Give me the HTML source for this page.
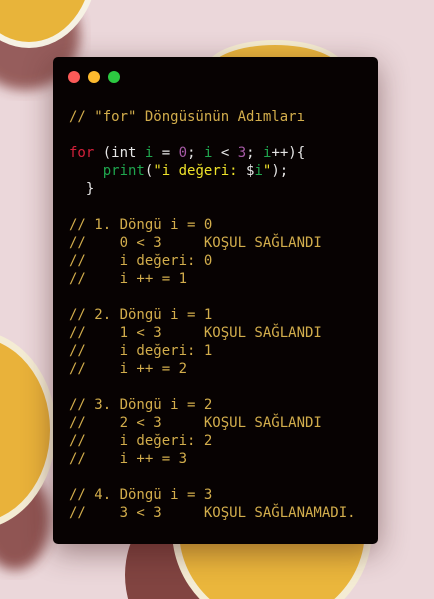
<!DOCTYPE html>
<html><head><meta charset="utf-8"><style>
html,body{margin:0;padding:0;width:434px;height:599px;overflow:hidden}
#s{position:relative;width:434px;height:599px;overflow:hidden;background:#ebd7da}
svg{position:absolute;left:0;top:0}
.win{position:absolute;left:53px;top:57px;width:325px;height:487px;background:#070202;border-radius:5px;box-shadow:0 8px 30px rgba(60,20,20,.45)}
.dot{position:absolute;top:14px;width:12px;height:12px;border-radius:50%}
pre{position:absolute;left:16px;top:51px;margin:0;font-family:"DejaVu Sans Mono","Liberation Mono",monospace;font-size:14px;line-height:18px;color:#d2ad4c}
.r{color:#d4213b}.w{color:#e6e6e6}.g{color:#1fa64e}.p{color:#a65aa6}.y{color:#eee22a}
</style></head><body><div id="s">
<svg width="434" height="599" viewBox="0 0 434 599">
<defs><filter id="b"><feGaussianBlur stdDeviation="6"/></filter></defs>
<ellipse cx="25" cy="35" rx="55" ry="55" fill="#7a3530" opacity=".75" filter="url(#b)"/>
<ellipse cx="29" cy="-36" rx="69" ry="84" fill="#f6f2e4"/>
<ellipse cx="29" cy="-36" rx="63" ry="78" fill="#e8b43a"/>
<ellipse cx="275" cy="70" rx="70" ry="30" fill="#f5edd2"/>
<ellipse cx="275" cy="70" rx="65" ry="25" fill="#e9b63e"/>
<ellipse cx="15" cy="520" rx="35" ry="50" fill="#7a3530" opacity=".8" filter="url(#b)"/>
<ellipse cx="-27" cy="430" rx="83" ry="100" fill="#f4ecd4"/>
<ellipse cx="-27" cy="430" rx="77" ry="93" fill="#e9b23a"/>
<ellipse cx="185" cy="575" rx="60" ry="75" fill="#6e2a26" opacity=".85"/>
<circle cx="272" cy="530" r="100" fill="#f4ecd4"/>
<circle cx="272" cy="530" r="93" fill="#eab63c"/>
</svg>
<div class="win">
<div class="dot" style="left:15px;background:#fb5a58"></div>
<div class="dot" style="left:35px;background:#fdba2e"></div>
<div class="dot" style="left:55px;background:#2cc841"></div>
<pre>// "for" Döngüsünün Adımları

<span class="r">for</span> <span class="w">(int</span> <span class="g">i</span> <span class="w">=</span> <span class="p">0</span><span class="w">;</span> <span class="g">i</span> <span class="w">&lt;</span> <span class="p">3</span><span class="w">;</span> <span class="g">i</span><span class="w">++){</span>
    <span class="g">print</span><span class="w">(</span><span class="y">"i değeri: </span><span class="w">$</span><span class="g">i</span><span class="y">"</span><span class="w">);</span>
  <span class="w">}</span>

// 1. Döngü i = 0
//    0 &lt; 3     KOŞUL SAĞLANDI
//    i değeri: 0
//    i ++ = 1

// 2. Döngü i = 1
//    1 &lt; 3     KOŞUL SAĞLANDI
//    i değeri: 1
//    i ++ = 2

// 3. Döngü i = 2
//    2 &lt; 3     KOŞUL SAĞLANDI
//    i değeri: 2
//    i ++ = 3

// 4. Döngü i = 3
//    3 &lt; 3     KOŞUL SAĞLANAMADI.</pre>
</div>
</div></body></html>
